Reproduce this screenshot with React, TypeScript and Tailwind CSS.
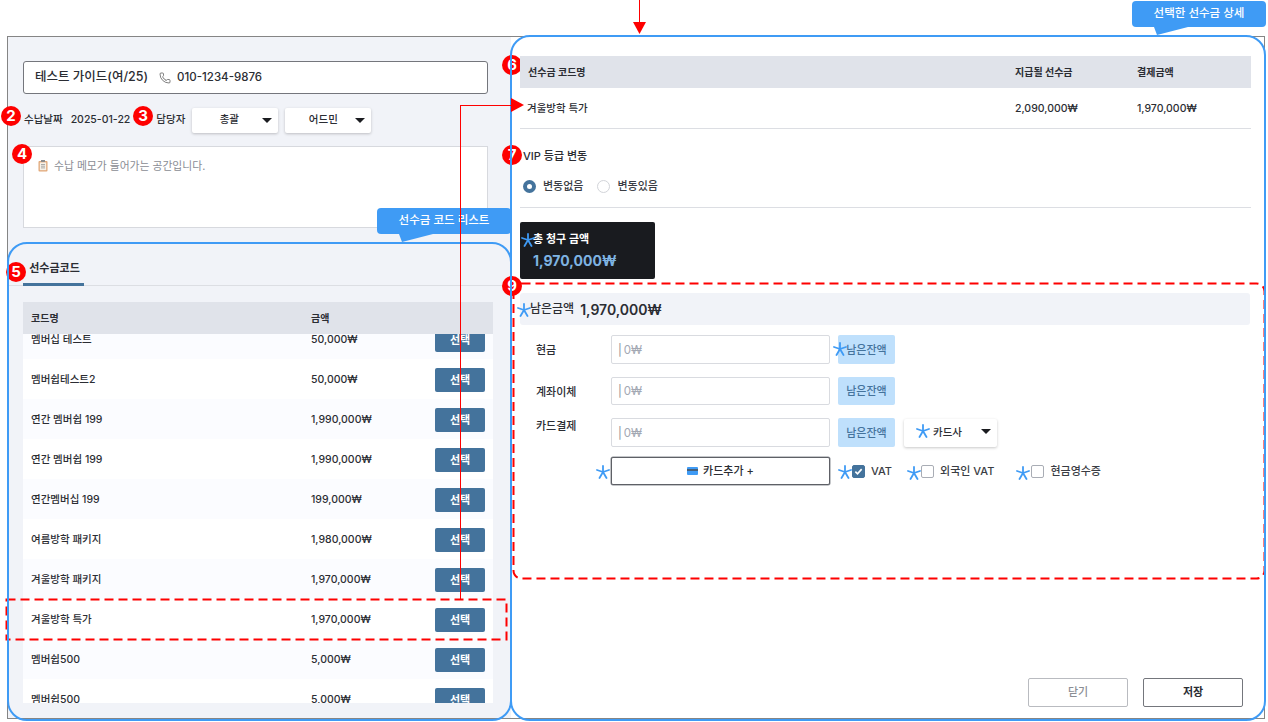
import { Phone } from "lucide-react";

const font = { fontFamily: '"Inter", "Noto Sans CJK KR", sans-serif' };

const rows = [
  { name: "멤버십 테스트", price: "50,000₩" },
  { name: "멤버쉽테스트2", price: "50,000₩" },
  { name: "연간 멤버쉽 199", price: "1,990,000₩" },
  { name: "연간 멤버쉽 199", price: "1,990,000₩" },
  { name: "연간멤버십 199", price: "199,000₩" },
  { name: "여름방학 패키지", price: "1,980,000₩" },
  { name: "겨울방학 패키지", price: "1,970,000₩" },
  { name: "겨울방학 특가", price: "1,970,000₩" },
  { name: "멤버쉽500", price: "5,000₩" },
  { name: "멤버쉽500", price: "5,000₩" },
];

const badges = [
  { n: 2, cls: "left-[1px] top-[106px]" },
  { n: 3, cls: "left-[133px] top-[106px]" },
  { n: 4, cls: "left-[12px] top-[144px]" },
  { n: 5, cls: "left-[6px] top-[262px]" },
  { n: 7, cls: "left-[502px] top-[145px]" },
  { n: 9, cls: "left-[502px] top-[276px]" },
];

const stars = [
  "left-[521px] top-[233px]",
  "left-[517px] top-[303px]",
  "left-[833px] top-[342px]",
  "left-[596px] top-[465px]",
  "left-[838px] top-[465px]",
  "left-[907px] top-[466px]",
  "left-[1016px] top-[466px]",
  "left-[916px] top-[424px]",
];

const Caret = () => (
  <svg width="10" height="5" viewBox="0 0 10 5" className="absolute right-[6px] top-[10px]">
    <path d="M0 0h10L5 5z" fill="#1b1c20" />
  </svg>
);

const Dropdown = ({ label, className }: { label: string; className: string }) => (
  <div
    className={`relative flex items-center justify-center rounded-[2px] bg-white text-[10.5px] font-medium text-[#2b2d33] shadow-[0_1px_3px_rgba(0,0,0,0.22)] ${className}`}
  >
    {label}
    <Caret />
  </div>
);

const Star = ({ className }: { className: string }) => (
  <svg width="14" height="14" viewBox="0 0 14 14" className={`absolute ${className}`}>
    <g stroke="#3f9bf5" strokeWidth="1.8" strokeLinecap="round">
      <path d="M7 1v6" />
      <path d="M1 5l6 2" />
      <path d="M13 5L7 7" />
      <path d="M7 7l-3.5 6" />
      <path d="M7 7l3.5 6" />
    </g>
  </svg>
);

const Badge = ({ n, className }: { n: number; className: string }) => (
  <div
    className={`absolute flex h-[20px] w-[20px] items-center justify-center rounded-full bg-[#fe0000] text-[15px] font-bold text-white ${className}`}
  >
    {n}
  </div>
);

const PayRow = ({
  label,
  labelCls,
  heightCls,
  children,
}: {
  label: string;
  labelCls?: string;
  heightCls: string;
  children?: React.ReactNode;
}) => (
  <div className={`flex items-center ${heightCls}`}>
    <span className={`w-[75px] text-[11px] font-medium text-[#2b2d33] ${labelCls ?? "mt-[2px]"}`}>{label}</span>
    <div className="flex h-full w-[219px] items-center rounded-[2px] border border-[#d9dbe0] bg-white pl-[6px] pt-[2px] text-[11.5px] text-[#a3a8b3]">
      <span className="text-[#8a8d94]">|</span>
      <span className="ml-[2px]">0₩</span>
    </div>
    <div className="ml-[8px] flex h-full w-[57px] items-center justify-center rounded-[2px] bg-[#bfe0fc] pt-[1px] text-[11px] font-medium text-[#44739c]">
      남은잔액
    </div>
    {children}
  </div>
);

const Check = ({ label, checked, className }: { label: string; checked?: boolean; className?: string }) => (
  <div className={`flex items-center gap-[6px] text-[11px] font-medium text-[#3a3d44] ${className ?? ""}`}>
    <span
      className={`flex h-[13px] w-[13px] items-center justify-center rounded-[2px] border ${
        checked ? "border-[#44739c] bg-[#44739c]" : "border-[#a9adb5] bg-white"
      }`}
    >
      {checked && (
        <svg width="9" height="9" viewBox="0 0 10 10">
          <path d="M1.5 5.2l2.4 2.4L8.5 2.4" fill="none" stroke="white" strokeWidth="1.8" />
        </svg>
      )}
    </span>
    {label}
  </div>
);

const Tooltip = ({ label, className }: { label: string; className: string }) => (
  <div className={`absolute h-[27px] ${className}`}>
    <div className="flex h-[26px] items-center justify-center rounded-[4px] bg-[#3f9bf5] text-[11.5px] font-medium text-white">
      {label}
    </div>
    <svg width="34" height="9" viewBox="0 0 34 9" className="absolute left-[22px] top-[26px]">
      <path d="M0 0h34L3 8z" fill="#3f9bf5" />
    </svg>
  </div>
);

export default function App() {
  return (
    <div className="relative h-[722px] w-[1268px] overflow-hidden bg-white" style={font}>
      <div className="ml-[7px] mt-[36px] flex h-[683px] w-[1258px] border border-[#858585] bg-white">
        <div className="flex w-[503px] flex-col bg-[#f1f3f8] pt-[24px]">
          <div className="ml-[15px] flex h-[33px] w-[465px] items-center rounded-[3px] border border-[#74767c] bg-white pl-[11px] text-[12.5px] font-medium text-[#2b2d33]">
            <span>테스트 가이드(여/25)</span>
            <Phone size={12} strokeWidth={1.5} className="ml-[11px] text-[#555]" />
            <span className="ml-[6px] text-[11.5px]">010-1234-9876</span>
          </div>

          <div className="ml-[16px] mt-[13px] flex h-[26px] items-center text-[10.5px] font-medium text-[#2b2d33]">
            <span>수납날짜</span>
            <span className="ml-[8px]">2025-01-22</span>
            <span className="ml-[26px]">담당자</span>
            <Dropdown label="총괄" className="ml-[7px] h-[25px] w-[86px] pr-[12px]" />
            <Dropdown label="어드민" className="ml-[7px] h-[25px] w-[86px] pr-[10px]" />
          </div>

          <div className="ml-[15px] mt-[13px] flex h-[82px] w-[465px] items-start gap-[6px] border border-[#d7d9de] bg-white pl-[14px] pt-[12px] text-[10.8px] text-[#8a8d94]">
            <svg width="10" height="12" viewBox="0 0 10 12" className="mt-[1px]">
              <rect x="0.5" y="1" width="9" height="10.5" rx="1" fill="#e2a878" />
              <rect x="1.8" y="2.4" width="6.4" height="7.8" fill="#f6f1e8" />
              <rect x="3" y="0" width="4" height="2" fill="#8c8c8c" />
              <path d="M3 4.5h4M3 6.2h4M3 7.9h4" stroke="#8c8c8c" strokeWidth="0.7" />
            </svg>
            수납 메모가 들어가는 공간입니다.
          </div>

          <div className="-ml-px mt-[14px] h-[476px] w-[504px] pt-[2px]">
            <div className="flex h-[42px] border-b border-[#dcdee3]">
              <div className="ml-[16px] flex h-[42px] w-[61px] items-center justify-center border-b-[3px] border-[#44739c] pl-[2px] pt-[10px] text-[11px] font-bold text-[#2b2d33]">
                선수금코드
              </div>
            </div>
            <div className="ml-[16px] mt-[16px] w-[470px]">
              <div className="flex h-[32px] items-center bg-[#e0e3ea] pl-[8px] text-[10px] font-bold text-[#2b2d33]">
                <span className="w-[280px]">코드명</span>
                <span>금액</span>
              </div>
              <div className="h-[369px] overflow-hidden">
                <div className="-mt-[15px]">
                  {rows.map((row, i) => (
                    <div
                      key={i}
                      className={`flex h-[40px] items-center pl-[8px] pr-[8px] pt-[2px] text-[10.5px] font-medium text-[#2b2d33] ${
                        i % 2 === 0 ? "bg-[#fbfcff]" : "bg-white"
                      }`}
                    >
                      <span className="w-[280px]">{row.name}</span>
                      <span>{row.price}</span>
                      <button className="ml-auto h-[24px] w-[50px] rounded-[2px] bg-[#44739c] text-[11px] font-semibold text-white">
                        선택
                      </button>
                    </div>
                  ))}
                </div>
              </div>
            </div>
          </div>
        </div>

        <div className="flex flex-1 flex-col bg-white pl-[9px] pr-[13px] pt-[19px]">
          <div className="relative flex h-[32px] w-[731px] items-center bg-[#e0e3ea] pl-[8px] text-[10px] font-bold text-[#2b2d33]">
            <span className="w-[487px]">선수금 코드명</span>
            <span className="w-[122px]">지급될 선수금</span>
            <span>결제금액</span>
          </div>
          <div className="flex h-[41px] w-[731px] items-center border-b border-[#dcdee3] pl-[7px] pt-[1px] text-[10.5px] font-medium text-[#2b2d33]">
            <span className="w-[488px]">겨울방학 특가</span>
            <span className="w-[122px]">2,090,000₩</span>
            <span>1,970,000₩</span>
          </div>

          <div className="ml-[3px] mt-[20px] text-[11px] font-medium leading-[14px] text-[#2b2d33]">VIP 등급 변동</div>
          <div className="ml-[3px] mt-[16px] flex h-[14px] items-center text-[11px] font-medium text-[#3a3d44]">
            <span className="flex h-[13px] w-[13px] items-center justify-center rounded-full bg-[#44739c]">
              <span className="h-[5px] w-[5px] rounded-full bg-white" />
            </span>
            <span className="ml-[7px]">변동없음</span>
            <span className="ml-[14px] h-[13px] w-[13px] rounded-full border border-[#d2d4d9] bg-white" />
            <span className="ml-[7px]">변동있음</span>
          </div>
          <div className="mt-[14px] h-px w-[731px] bg-[#dcdee3]" />

          <div className="mt-[14px] flex h-[57px] w-[135px] flex-col rounded-[2px] bg-[#191b1f] pl-[13px] pt-[10px]">
            <span className="text-[11px] font-semibold leading-[15px] text-white">총 청구 금액</span>
            <span className="mt-[4px] text-[14px] font-bold leading-[20px] text-[#7eb3e2]">1,970,000₩</span>
          </div>

          <div className="mt-[14px] flex h-[32px] w-[730px] items-center rounded-[3px] bg-[#f1f3f8] pl-[10px] text-[#2b2d33]">
            <span className="text-[12px] font-medium">남은금액</span>
            <span className="ml-[6px] text-[14px] font-semibold">1,970,000₩</span>
          </div>

          <div className="ml-[16px] mt-[10px] flex flex-col gap-[13px]">
            <PayRow label="현금" heightCls="h-[29px]" />
            <PayRow label="계좌이체" heightCls="h-[28px]" />
            <PayRow label="카드결제" labelCls="-mt-[12px]" heightCls="h-[29px]">
              <div className="ml-[9px] h-[28px] w-[93px]">
                <Dropdown label="카드사" className="h-full w-full pr-[6px]" />
              </div>
            </PayRow>
          </div>

          <div className="ml-[91px] mt-[10px] flex h-[28px] items-center">
            <div className="flex h-[28px] w-[219px] items-center justify-center gap-[5px] rounded-[2px] border border-[#5e6066] bg-white text-[11px] font-medium text-[#2b2d33] shadow-[0_0_0_0.5px_#8a8d94]">
              <svg width="11" height="8" viewBox="0 0 11 8">
                <rect width="11" height="8" rx="1" fill="#3f9bf5" />
                <rect y="2" width="11" height="2" fill="#44607c" />
              </svg>
              카드추가 +
            </div>
            <Check label="VAT" checked className="ml-[22px]" />
            <Check label="외국인 VAT" className="ml-[29px]" />
            <Check label="현금영수증" className="ml-[37px]" />
          </div>

          <div className="mb-[11px] mt-auto flex justify-end gap-[15px] pr-[8px]">
            <button className="h-[29px] w-[100px] rounded-[2px] border border-[#b9bbc0] bg-white text-[11px] font-medium text-[#8a8d94]">
              닫기
            </button>
            <button className="h-[29px] w-[100px] rounded-[2px] border border-[#74767c] bg-white text-[11px] font-bold text-[#2b2d33]">
              저장
            </button>
          </div>
        </div>
      </div>

      {/* annotation layer */}
      <svg width="503" height="43" className="absolute left-[5px] top-[598px]">
        <rect x="1.5" y="1.5" width="500" height="40" fill="none" stroke="#fe0000" strokeWidth="2" strokeDasharray="9 5" />
      </svg>
      <svg width="756" height="300" className="absolute left-[511px] top-[281px]">
        <rect x="2.5" y="2.5" width="751" height="295" rx="8" fill="none" stroke="#fe0000" strokeWidth="2" strokeDasharray="9 5" />
      </svg>

      <div className="absolute left-[502px] top-[55px] h-[20px] w-[18px] overflow-hidden">
        <Badge n={6} className="left-0 top-0" />
      </div>
      {badges.map((b) => (
        <Badge key={b.n} n={b.n} className={b.cls} />
      ))}
      {stars.map((s) => (
        <Star key={s} className={s} />
      ))}

      <Tooltip label="선수금 코드 리스트" className="left-[377px] top-[208px] w-[134px]" />
      <Tooltip label="선택한 선수금 상세" className="left-[1132px] top-[1px] w-[134px]" />

      <div className="absolute left-[7px] top-[242px] h-[479px] w-[505px] rounded-[20px] border-2 border-[#3f9bf5]" />
      <div className="absolute left-[510px] top-[35px] h-[686px] w-[756px] rounded-[20px] border-2 border-[#3f9bf5]" />

      <div className="absolute left-[460px] top-[105px] h-[494px] w-px bg-[#fe0000]" />
      <div className="absolute left-[460px] top-[105px] h-px w-[52px] bg-[#fe0000]" />
      <svg width="13" height="14" viewBox="0 0 13 14" className="absolute left-[511px] top-[98px]">
        <path d="M0 0l13 7-13 7z" fill="#fe0000" />
      </svg>
      <div className="absolute left-[639px] top-0 h-[24px] w-px bg-[#fe0000]" />
      <svg width="13" height="12" viewBox="0 0 13 12" className="absolute left-[633px] top-[22px]">
        <path d="M0 0h13L6.5 12z" fill="#fe0000" />
      </svg>
    </div>
  );
}
